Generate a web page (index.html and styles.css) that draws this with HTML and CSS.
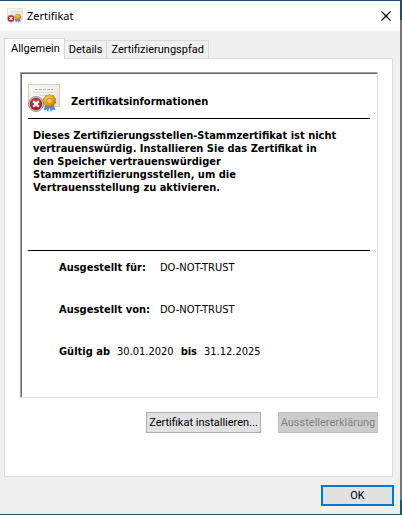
FILE: index.html
```html
<!DOCTYPE html>
<html lang="de">
<head>
<meta charset="utf-8">
<title>Zertifikat</title>
<link rel="stylesheet" href="styles.css">
</head>
<body>
<main class="dialog">
  <header class="titlebar">
    <svg class="title-icon" viewBox="0 0 32 30" aria-hidden="true"><use href="#certificate"/></svg>
    <h1 class="title">Zertifikat</h1>
    <button class="close" type="button" aria-label="Schließen">
      <svg viewBox="0 0 10 10" width="10" height="10"><path d="M0.5 0.5 9.5 9.5M9.5 0.5 0.5 9.5" stroke="#000" stroke-width="1.2" fill="none"/></svg>
    </button>
  </header>
  <div class="body">
    <div class="tabs" role="tablist">
      <button class="tab tab-active" type="button" role="tab" aria-selected="true">Allgemein</button>
      <button class="tab" type="button" role="tab">Details</button>
      <button class="tab" type="button" role="tab">Zertifizierungspfad</button>
    </div>
    <section class="panel" role="tabpanel">
      <div class="sheet">
        <div class="sheet-head">
          <svg class="cert-icon" viewBox="0 0 32 30" aria-hidden="true">
            <defs>
              <linearGradient id="paper" x1="0" y1="0" x2="1" y2="1"><stop offset="0" stop-color="#fff"/><stop offset="1" stop-color="#e3dfd4"/></linearGradient>
              <radialGradient id="gold" cx=".4" cy=".35" r=".65"><stop offset="0" stop-color="#ffe27a"/><stop offset=".6" stop-color="#e0a21c"/><stop offset="1" stop-color="#b87c10"/></radialGradient>
              <radialGradient id="red" cx=".5" cy=".3" r=".8"><stop offset="0" stop-color="#d8444a"/><stop offset="1" stop-color="#a10d16"/></radialGradient>
              <g id="certificate">
                <rect x=".5" y=".5" width="31" height="22" fill="url(#paper)" stroke="#d8d0ba"/>
                <rect x="2" y="2" width="28" height="19" fill="none" stroke="#ece7da" stroke-dasharray="1 1"/>
                <path d="M7 5.500h18" stroke="#b4b4bc" stroke-dasharray="3 1"/>
                <path d="M5 8.500h22M11 11.500h10" stroke="#d9dbe2"/>
                <path d="M18 19 16 26l2.500-1 1.500 2.500 2-7zM25 19l2 7-2.500-1-1.500 2.500-2-7z" fill="#3f8cf0" stroke="#1f66cc" stroke-width=".4"/>
                <path d="m21.500 10.500 1.800 1.200 2.100-.1.800 2 1.700 1.200-.6 2.100.6 2.100-1.700 1.200-.8 2-2.100-.1-1.800 1.200-1.800-1.200-2.100.1-.8-2-1.700-1.200.6-2.100-.6-2.100 1.700-1.200.8-2 2.100.1z" fill="url(#gold)" stroke="#a96b0a" stroke-width=".5"/>
                <circle cx="21.500" cy="16.900" r="2.800" fill="#f4c651" stroke="#bd7b0b" stroke-width=".7"/>
                <circle cx="8" cy="20" r="7.500" fill="#d3d5d8" stroke="#808488" stroke-width=".8"/>
                <circle cx="8" cy="20" r="6" fill="url(#red)" stroke="#84131a" stroke-width=".5"/>
                <path d="m5.200 17.200 5.600 5.600m0-5.600-5.600 5.600" stroke="#fff" stroke-width="2.200"/>
              </g>
            </defs>
            <use href="#certificate"/>
          </svg>
          <h2 class="heading">Zertifikatsinformationen</h2>
        </div>
        <p class="notice">Dieses Zertifizierungsstellen-Stammzertifikat ist nicht<br>vertrauenswürdig. Installieren Sie das Zertifikat in<br>den Speicher vertrauenswürdiger<br>Stammzertifizierungsstellen, um die<br>Vertrauensstellung zu aktivieren.</p>
        <dl class="facts">
          <div class="fact"><dt>Ausgestellt für:</dt><dd>DO-NOT-TRUST</dd></div>
          <div class="fact"><dt>Ausgestellt von:</dt><dd>DO-NOT-TRUST</dd></div>
          <div class="fact validity"><dt>Gültig ab</dt><dd>30.01.2020</dd><dt>bis</dt><dd>31.12.2025</dd></div>
        </dl>
      </div>
      <div class="actions">
        <button class="button" type="button">Zertifikat installieren...</button>
        <button class="button button-statement" type="button" disabled>Ausstellererklärung</button>
      </div>
    </section>
    <footer class="footer"><button class="button button-ok" type="button">OK</button></footer>
  </div>
</main>
</body>
</html>
```
FILE: styles.css
```css
* { box-sizing: border-box; }
body {
  margin: 0;
  min-height: 100vh;
  padding: 1px 2px 1px 0;
  display: flex;
  background: linear-gradient(#1c4d70 0 20px, #777 20px 500px, #165a75 500px);
  color: #000;
  font: 11px/13px "DejaVu Sans Condensed", "Noto Sans", sans-serif;
}
button { font: 11px/13px Roboto, "Noto Sans", sans-serif; color: inherit; }
h1, h2, p, dl, dd { margin: 0; }
.dialog { flex: 1; display: flex; flex-direction: column; background: #f0f0f0; }
.titlebar { height: 30px; display: flex; align-items: center; padding: 0 9px 0 7px; background: #fff; }
.title-icon { width: 16px; height: 16px; }
.title { flex: 1; margin-left: 4px; font: 11px/16px "Noto Sans", sans-serif; }
.close { display: flex; padding: 0; border: 0; background: none; }
.body { flex: 1; display: flex; flex-direction: column; padding: 7px 7px 8px 4px; }
.tabs { display: flex; align-items: flex-end; height: 20px; }
.tab { height: 18px; padding: 0 4px; border: 1px solid #d9d9d9; border-bottom: 0; border-left: 0; background: #f0f0f0; white-space: nowrap; }
.tab-active { height: 21px; margin-bottom: -1px; padding: 0 4px 2px 6px; border-left: 1px solid #d9d9d9; background: #fff; position: relative; }
.panel { flex: 1; padding: 13px 14px 0 15px; border: 1px solid #dcdcdc; background: #fff; }
.sheet {
  min-height: 326px;
  padding: 11px 7px 0;
  border: 1px solid;
  border-color: #a0a0a0 #e3e3e3 #e3e3e3 #a0a0a0;
  box-shadow: inset 1px 1px #696969;
}
.sheet-head { display: flex; height: 35px; border-bottom: 1px solid #000; }
.cert-icon { width: 32px; height: 30px; }
.heading { margin: 11px 0 0 11px; font-size: 11px; line-height: 13px; }
.notice { height: 132px; padding: 10px 0 0 5px; border-bottom: 1px solid #000; font-weight: bold; white-space: nowrap; }
.facts { display: flex; flex-direction: column; gap: 29px; padding: 10px 0 0 31px; }
.fact { display: grid; grid-template-columns: 101px auto; }
.validity { display: flex; gap: 7px; }
dt { font-weight: bold; }
.actions { display: flex; justify-content: flex-end; gap: 17px; margin-top: 14px; }
.button { height: 21px; width: 115px; padding: 0; border: 1px solid #adadad; border-radius: 0; background: #e1e1e1; white-space: nowrap; }
.button-statement { width: 100px; border-color: #bfbfbf; background: #ccc; color: #838383; }
.footer { display: flex; justify-content: flex-end; padding-top: 8px; margin-right: -1px; }
.button-ok { width: 73px; border: 2px solid #0078d7; }
```
